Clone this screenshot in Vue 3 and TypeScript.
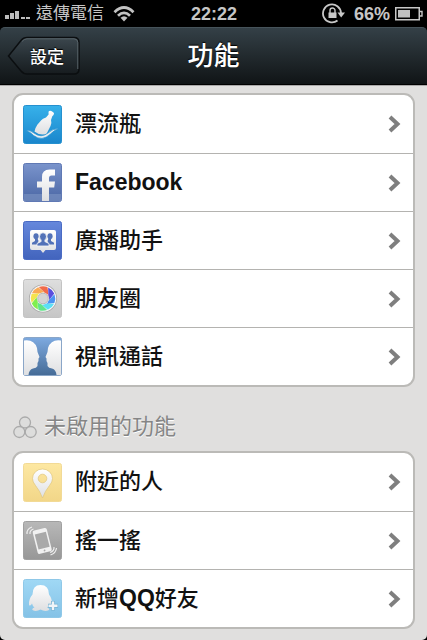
<script setup lang="ts">
type IconName = 'bottle' | 'facebook' | 'broadcast' | 'moments' | 'video' | 'nearby' | 'shake' | 'qq'

interface Feature {
  label: string
  icon: IconName
}

const enabled: Feature[] = [
  { label: '漂流瓶', icon: 'bottle' },
  { label: 'Facebook', icon: 'facebook' },
  { label: '廣播助手', icon: 'broadcast' },
  { label: '朋友圈', icon: 'moments' },
  { label: '視訊通話', icon: 'video' },
]

const disabled: Feature[] = [
  { label: '附近的人', icon: 'nearby' },
  { label: '搖一搖', icon: 'shake' },
  { label: '新增QQ好友', icon: 'qq' },
]

const sections = [
  { id: 'enabled', title: '', items: enabled },
  { id: 'disabled', title: '未啟用的功能', items: disabled },
]

const tiles: Record<IconName, [string, string, string]> = {
  bottle: ['#37b1ea', '#1a86cc', '#2590cf'],
  facebook: ['#7a94cc', '#4a66a4', '#6079b4'],
  broadcast: ['#6688dc', '#4264bd', '#4a6bc4'],
  moments: ['#dedede', '#c6c6c6', '#c3c3c3'],
  video: ['#7eaae0', '#456b96', '#8aa6c8'],
  nearby: ['#fde8a2', '#f2d688', '#f2da96'],
  shake: ['#b8b8b8', '#979797', '#a0a0a0'],
  qq: ['#a0d8f5', '#84c2e6', '#8fc8e8'],
}

const blades = ['#f06b4b', '#5a4ede', '#4b93f2', '#5ce0f4', '#62e58a', '#80ef4e', '#f4e34e', '#f9aa55']

// Latin runs are set in a heavier face than the Chinese text around them.
const runs = (text: string) =>
  (text.match(/[A-Za-z]+|[^A-Za-z]+/g) ?? []).map((part) => ({ part, latin: /^[A-Za-z]/.test(part) }))
</script>

<template>
  <div class="screen">
    <div class="status">
      <div class="side">
        <svg class="signal" width="27" height="12" viewBox="0 0 27 12" aria-hidden="true">
          <path d="M0 7h4v4H0zM5 5h4v6H5zM10 3h4v8h-4zM16 9h4v2h-4zM21 9h4v2h-4z" fill="#bdbdbd" />
        </svg>
        <span class="carrier">遠傳電信</span>
        <svg class="wifi" width="22" height="16" viewBox="0 0 22 16" aria-hidden="true">
          <g fill="none" stroke="#c2c2c2" stroke-width="2.8">
            <path d="M1.5 6.2Q11-3 20.500 6.200" />
            <path d="M5 9.700Q11 4 17 9.700" />
          </g>
          <path d="M7.500 11.800Q11 8.800 14.500 11.800L11 15.500z" fill="#c2c2c2" />
        </svg>
      </div>
      <time class="clock">22:22</time>
      <div class="side end">
        <svg width="23" height="21" viewBox="0 0 23 21" aria-hidden="true">
          <path d="M15.500 17.500A9 9 0 1 1 19 10" fill="none" stroke="#c8c8c8" stroke-width="1.800" />
          <path d="M15.500 9.500h7.500l-3.800 5z" fill="#c8c8c8" />
          <path d="M6.500 9.500h8V15h-8z" fill="#c8c8c8" />
          <path d="M8 10V7.500a2.500 2.500 0 0 1 5 0V10" fill="none" stroke="#c8c8c8" stroke-width="1.400" />
        </svg>
        <span class="percent">66%</span>
        <svg width="28" height="14" viewBox="0 0 28 14" aria-hidden="true">
          <rect x="0.750" y="0.750" width="23.500" height="12" fill="none" stroke="#c8c8c8" stroke-width="1.500" />
          <rect x="3" y="3" width="12" height="7.500" fill="#c0c0c0" />
          <path d="M24.500 4.500h2.500v4.500h-2.500" fill="none" stroke="#c8c8c8" stroke-width="1.400" />
        </svg>
      </div>
    </div>

    <header class="nav">
      <button class="back" type="button">
        <svg class="back-shape" width="74" height="40" viewBox="0 0 74 40" aria-hidden="true">
          <defs>
            <linearGradient id="back-fill" x1="0" y1="0" x2="0" y2="1">
              <stop offset="0" stop-color="#3c474e" />
              <stop offset="0.500" stop-color="#273035" />
              <stop offset="1" stop-color="#171c1f" />
            </linearGradient>
          </defs>
          <path d="M1.500 20L14 4.500Q16.500 1.500 20 1.500H67Q72 1.500 72 6.500V33Q72 38 67 38H20Q16.500 38 14 35z" fill="url(#back-fill)" stroke="#0b0e10" stroke-width="1.500" />
          <path d="M15 5.500Q17 2.800 20 2.800H67Q70.800 3 70.800 6.500V33" fill="none" stroke="#59646a" />
        </svg>
        <span class="back-label">設定</span>
      </button>
      <h1>功能</h1>
    </header>

    <main>
      <section v-for="section in sections" :key="section.id">
        <h2 v-if="section.title">
          <svg width="24" height="23" viewBox="0 0 24 23" aria-hidden="true">
            <g fill="#dddddc" stroke="#aaa" stroke-width="1.300">
              <circle cx="12" cy="6.500" r="5.500" />
              <circle cx="6.300" cy="16" r="5.500" />
              <circle cx="17.700" cy="16" r="5.500" />
            </g>
          </svg>
          {{ section.title }}
        </h2>
        <ul :class="['card', section.id]">
          <li v-for="item in section.items" :key="item.icon">
            <a href="#">
              <svg class="tile" width="39" height="39" viewBox="0 0 39 39" aria-hidden="true">
                <defs>
                  <linearGradient :id="'tile-' + item.icon" x1="0" y1="0" x2="0" y2="1">
                    <stop offset="0" :stop-color="tiles[item.icon][0]" />
                    <stop offset="1" :stop-color="tiles[item.icon][1]" />
                  </linearGradient>
                  <linearGradient :id="'glyph-' + item.icon" x1="0" y1="0" x2="0" y2="1">
                    <stop offset="0" stop-color="#fff" />
                    <stop offset="1" stop-color="#dedfe1" />
                  </linearGradient>
                </defs>
                <rect x="0.500" y="0.500" width="38" height="38" rx="2" :fill="`url(#tile-${item.icon})`" :stroke="tiles[item.icon][2]" />

                <g v-if="item.icon === 'bottle'">
                  <path d="M25.500 6.800Q26.500 5 28.300 6L30.300 7.300Q31.700 8.500 30.500 10L29.300 11.300L28 15Q29 18 27.500 21L23.500 29Q17 31 11.500 26.500Q12 23 14.500 19.500L18 15.500Q19.500 13.500 23 12.500L25.600 9.500z" fill="url(#glyph-bottle)" />
                  <path d="M3 26Q7 24.500 11 28Q18 33.500 25 28Q30 23 36 24Q31 25 27.500 29Q19 37 10.500 30.500Q7 26.500 3 26z" fill="#e9edf0" stroke="#1f8fd0" stroke-width="0.700" />
                </g>

                <g v-else-if="item.icon === 'facebook'">
                  <path d="M1 31H38V38H1z" fill="#7890c0" opacity="0.700" />
                  <path d="M19 38V24.500H14V18.500H19V14Q19 6.500 26.500 6.500H32V12.500H28.500Q26 12.500 26 15V18.500H32L31.200 24.500H26V38z" fill="url(#glyph-facebook)" />
                </g>

                <g v-else-if="item.icon === 'broadcast'">
                  <path d="M9 9H31Q33 9 33 11V27Q33 29 31 29H22.500L20 32L17.500 29H9Q7 29 7 27V11Q7 9 9 9z" fill="url(#glyph-broadcast)" />
                  <g fill="#5272b8">
                    <ellipse cx="13" cy="15.200" rx="2.600" ry="2.900" />
                    <ellipse cx="27" cy="15.200" rx="2.600" ry="2.900" />
                    <path d="M9 23.500V21.800L12 20V17H14.300L15.500 20L14 23.500zM31 23.500V21.800L28 20V17H25.700L24.500 20L26 23.500z" />
                    <g stroke="#f4f5f6" stroke-width="0.800">
                      <path d="M14 25V22.500L18.300 20.500V17H21.700V20.500L26 22.500V25z" />
                      <ellipse cx="20" cy="15.700" rx="3.500" ry="4" />
                    </g>
                    <path d="M18.700 17h2.600v4h-2.600z" />
                  </g>
                </g>

                <g v-else-if="item.icon === 'moments'">
                  <circle cx="20" cy="19.500" r="14" fill="#aaa" />
                  <circle cx="20" cy="19.500" r="13.200" fill="#fafafa" />
                  <path
                    v-for="(color, n) in blades"
                    :key="color"
                    d="M15.800 8A12.300 12.300 0 0 1 24.500 8.100L25.600 16.500A6 6 0 0 0 22 13.900z"
                    :fill="color"
                    :transform="`rotate(${n * 45} 20 19.500)`"
                  />
                  <circle cx="20" cy="19.500" r="5.300" fill="#d4d4d4" stroke="#b9b9b9" />
                </g>

                <g v-else-if="item.icon === 'video'">
                  <path d="M1 3.500Q11 2 14 11L14.500 15L16.500 20L15.500 21.500V24L14.500 26V29Q13.500 31 10 31.500Q6 32.500 5.500 38H1zM38 3.500Q28 2 25 11L24.500 15L22.500 20L23.500 21.500V24L24.500 26V29Q25.500 31 29 31.500Q33 32.500 33.500 38H38z" fill="url(#glyph-video)" />
                </g>

                <g v-else-if="item.icon === 'nearby'">
                  <path fill-rule="evenodd" d="M19.500 35Q17 28 12.500 22.500Q9.500 19 9.500 15.500A10 9.500 0 0 1 29.500 15.500Q29.500 19 26.500 22.500Q22 28 19.500 35zM19.500 11.200A4.300 4.300 0 1 0 19.500 19.800A4.300 4.300 0 1 0 19.500 11.200z" fill="url(#glyph-nearby)" stroke="#dfc57b" stroke-width="0.700" />
                </g>

                <g v-else-if="item.icon === 'shake'">
                  <g transform="rotate(-14 19 20)">
                    <rect x="12" y="8" width="14.500" height="24" rx="2" fill="#f1f1f1" />
                    <rect x="13.500" y="12" width="11.500" height="15.500" fill="#a9a9a9" />
                    <circle cx="19.200" cy="29.800" r="0.900" fill="#aaa" />
                  </g>
                  <path d="M5 13Q4.500 8 10 6M8 13Q7.500 9.500 11.500 8M32 26Q32.500 30 28 31.500M34.500 27Q34 32 28.500 34" transform="translate(-1 0)" fill="none" stroke="#eee" stroke-width="1.200" />
                </g>

                <g v-else>
                  <path d="M17.500 6Q26 6 26 15.500Q29.500 20 29 26Q28 27 26.500 24.500Q26 27 24 28.500Q27 29.500 26 31Q22 33 17.500 30.500Q13 33 9.500 31Q8.500 29.500 11.500 28.500Q9.500 27 9 24.500Q7.500 27.500 6 26Q5.500 20 9.500 15.500Q9.500 6 17.500 6z" fill="url(#glyph-qq)" />
                  <path d="M30 22V31.500M25 26.800H35" stroke="#78b2d2" stroke-width="4" />
                  <path d="M30 22.500V31M25.500 26.800H34.500" stroke="#f1f5f8" stroke-width="2.400" />
                </g>
              </svg>
              <span class="label">
                <span v-for="run in runs(item.label)" :key="run.part" :class="{ latin: run.latin }">{{ run.part }}</span>
              </span>
              <svg class="chevron" width="13" height="18" viewBox="0 0 13 18" aria-hidden="true">
                <path d="M2 2L9.500 9L2 16" fill="none" stroke="#7f7f7f" stroke-width="4" />
              </svg>
            </a>
          </li>
        </ul>
      </section>
    </main>
  </div>
</template>

<style>
body {
  background: #000;
}
</style>

<style scoped>
.screen {
  box-sizing: border-box;
  min-height: 100vh;
  display: flex;
  flex-direction: column;
  background: #000;
  font-family: 'Liberation Sans', 'Noto Sans CJK TC', sans-serif;
}

.status {
  height: 27px;
  padding: 0 4px 0 5px;
  display: grid;
  grid-template-columns: 1fr auto 1fr;
  align-items: center;
  color: #c6c6c6;
  font-size: 18px;
  line-height: 26px;
}

.side {
  display: flex;
  align-items: center;
}

.carrier {
  margin: 0 9px 0 4px;
  font-size: 17px;
}

.clock,
.percent {
  font-weight: bold;
}

.end {
  justify-content: flex-end;
}

.percent {
  margin: 0 5px 0 9px;
}

.nav {
  height: 58px;
  box-sizing: border-box;
  padding: 0 7px;
  display: grid;
  grid-template-columns: 1fr auto 1fr;
  align-items: center;
  border-top: 1px solid #46535a;
  border-bottom: 1px solid #000;
  border-radius: 5px 5px 0 0;
  background: linear-gradient(#344047, #222a2e 50%, #101416);
}

.back {
  display: grid;
  justify-self: start;
  align-items: center;
  padding: 0;
  border: 0;
  background: none;
  color: #fff;
  font: 500 17px/24px 'Noto Sans CJK TC', sans-serif;
  text-shadow: 0 -1px 1px #000;
}

.back-shape,
.back-label {
  grid-area: 1 / 1;
}

.back-label {
  padding-left: 6px;
}

h1 {
  margin: 0;
  color: #fff;
  font-size: 26px;
  font-weight: 500;
  line-height: 36px;
  text-shadow: 0 -1px 1px #000;
}

main {
  flex: 1;
  padding: 7px 12px 11px;
  border-top: 1px solid #aaa9a9;
  border-radius: 0 0 5px 5px;
  background: #e0dfde;
}

h2 {
  display: flex;
  align-items: center;
  gap: 7px;
  margin: 24px 0 8px;
  padding-left: 1px;
  color: #858585;
  font-size: 22px;
  font-weight: 400;
  line-height: 32px;
  text-shadow: 0 1px 0 #fff;
}

.card {
  display: grid;
  grid-auto-rows: 1fr;
  box-sizing: border-box;
  margin: 0;
  padding: 0;
  list-style: none;
  overflow: hidden;
  border: 2px solid #bbbab7;
  border-radius: 11px;
  background: #fff;
}

.enabled {
  min-height: 294px;
}

.disabled {
  min-height: 178px;
}

li {
  display: grid;
}

li + li {
  border-top: 1px solid #b4b3b0;
}

a {
  display: flex;
  align-items: center;
  padding: 0 12px 0 9px;
  color: #111;
  text-decoration: none;
}

.label {
  flex: 1;
  padding-left: 13px;
  font-size: 22px;
  font-weight: 500;
  line-height: 34px;
}

.latin {
  font-size: 23px;
  font-weight: bold;
}
</style>
